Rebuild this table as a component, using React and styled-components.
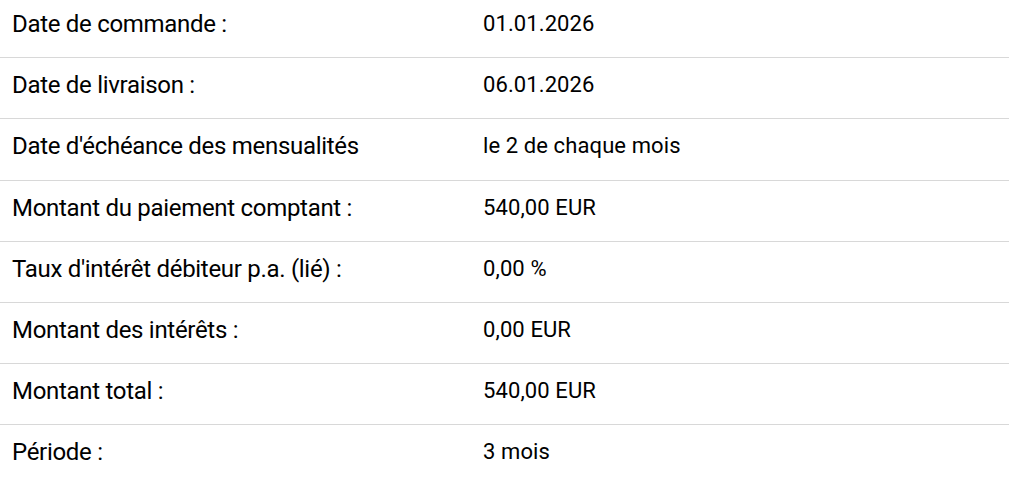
import React from 'react';
import styled, { createGlobalStyle } from 'styled-components';

const GlobalStyle = createGlobalStyle`
  html, body {
    margin: 0;
    padding: 0;
    background: #ffffff;
  }
`;

const rows = [
  { label: 'Date de commande :', value: '01.01.2026' },
  { label: 'Date de livraison :', value: '06.01.2026' },
  { label: "Date d'échéance des mensualités", value: 'le 2 de chaque mois' },
  { label: 'Montant du paiement comptant :', value: '540,00 EUR' },
  { label: "Taux d'intérêt débiteur p.a. (lié) :", value: '0,00 %' },
  { label: 'Montant des intérêts :', value: '0,00 EUR' },
  { label: 'Montant total :', value: '540,00 EUR' },
  { label: 'Période :', value: '3 mois' },
];

const Table = styled.div`
  width: 100%;
  color: #000;
`;

const Row = styled.div`
  display: grid;
  grid-template-columns: 468px 1fr;
  border-bottom: 1px solid #d8d8d8;

  &:first-child > * {
    padding-top: 12px;
  }
`;

const Cell = styled.div`
  padding: 15px 0 21.2px ${({ $value }) => ($value ? '15px' : '12px')};
  line-height: 24px;
  font-family: Roboto, 'Liberation Sans', sans-serif;
  font-size: ${({ $value }) => ($value ? '22px' : '24px')};
  letter-spacing: ${({ $value }) => ($value ? '0.1px' : '-0.3px')};
  white-space: nowrap;
`;

const App = () => (
  <>
    <GlobalStyle />
    <Table>
      {rows.map((row) => (
        <Row key={row.label}>
          <Cell>{row.label}</Cell>
          <Cell $value>{row.value}</Cell>
        </Row>
      ))}
    </Table>
  </>
);

export default App;
